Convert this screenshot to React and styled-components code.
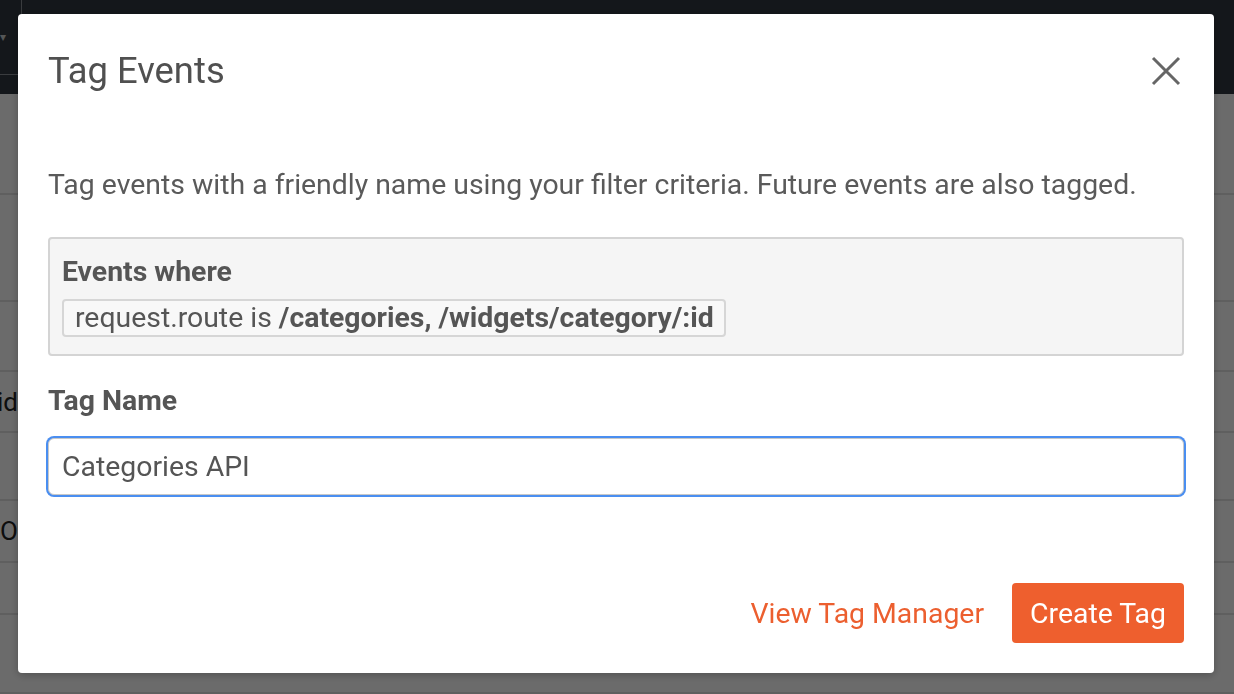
import styled, { createGlobalStyle } from "styled-components";

const GlobalStyle = createGlobalStyle`
  html, body {
    margin: 0;
    padding: 0;
    height: 100%;
    overflow: hidden;
    background: #ffffff;
    font-family: Roboto, "Noto Sans", "Liberation Sans", sans-serif;
  }
  #root {
    height: 100%;
  }
  * {
    box-sizing: border-box;
  }
`;

// Page sitting behind the modal
const Page = styled.div`
  height: 100%;
  display: flex;
  flex-direction: column;
`;

const TopBar = styled.header`
  height: 95px;
  background: #303840;
  display: flex;
`;

const TopBarCell = styled.div`
  width: 22px;
  height: 75px;
  border-right: 1px solid #8a8f96;
  border-bottom: 1px solid #8a8f96;
  display: flex;
  align-items: center;
  color: #c9ccd0;
  font-size: 12px;
`;

const Row = styled.div`
  height: ${(p) => p.h}px;
  border-bottom: 2px solid #e2e2e2;
  display: flex;
  align-items: center;
  font-size: 26px;
  color: #222;
`;

const RowCell = styled.div`
  width: 18px;
  overflow: hidden;
  white-space: nowrap;
  display: flex;
  justify-content: ${(p) => (p.end ? "flex-end" : "flex-start")};
`;

// Modal
const Overlay = styled.div`
  position: fixed;
  inset: 0;
  background: rgba(0, 0, 0, 0.58);
  display: flex;
  justify-content: flex-start;
  align-items: flex-start;
  padding: 14px 0 0 18px;
`;

const Modal = styled.div`
  width: 1196px;
  background: #ffffff;
  border-radius: 4px;
  padding: 37px 30px 30px 30px;
  color: #555555;
  box-shadow: 0 2px 8px rgba(0, 0, 0, 0.25);
`;

const ModalHeader = styled.div`
  display: flex;
  justify-content: space-between;
  align-items: center;
`;

const Title = styled.h2`
  margin: 0;
  font-size: 36.4px;
  line-height: 40px;
  font-weight: 400;
  color: #505050;
`;

const CloseButton = styled.button`
  border: none;
  background: none;
  padding: 0;
  margin-right: 3px;
  width: 30px;
  height: 30px;
  display: flex;
  align-items: center;
  justify-content: center;
  cursor: pointer;
`;

const Description = styled.p`
  margin: 76px 0 0;
  font-size: 28.4px;
  line-height: 36px;
  color: #5a5a5a;
`;

const FilterBox = styled.div`
  margin-top: 34px;
  background: #f5f5f5;
  border: 2px solid #d4d4d4;
  border-radius: 4px;
  padding: 18px 13px 17px 12px;
`;

const Label = styled.div`
  font-size: 28.4px;
  line-height: 30px;
  font-weight: 700;
  color: #555555;
`;

const FieldLabel = styled(Label)`
  margin-top: 30px;
`;

const Chip = styled.span`
  display: inline-block;
  margin-top: 12px;
  padding: 2px 10px 2px 11px;
  border: 2px solid #d6d6d6;
  border-radius: 4px;
  background: #f8f8f8;
  font-size: 28.4px;
  line-height: 30px;
  color: #555555;

  b {
    font-weight: 700;
  }
`;

const TextInput = styled.input`
  display: block;
  width: 100%;
  height: 57px;
  margin-top: 22px;
  padding: 0 13px;
  border: 1px solid #c8c8c8;
  border-radius: 6px;
  box-shadow: 0 0 0 2px #4a8ef0;
  outline: none;
  font-family: inherit;
  font-size: 28.4px;
  color: #555555;
`;

const Footer = styled.div`
  margin-top: 88px;
  display: flex;
  justify-content: flex-end;
  align-items: center;
  gap: 28px;
`;

const TextLink = styled.a`
  font-size: 28.4px;
  color: #ec5f2f;
  text-decoration: none;
  cursor: pointer;
`;

const PrimaryButton = styled.button`
  height: 60px;
  padding: 0 18px;
  border: none;
  border-radius: 4px;
  background: #ee5f2e;
  color: #ffffff;
  font-family: inherit;
  font-size: 28.4px;
  cursor: pointer;
`;

const rows = [
  { h: 102 },
  { h: 108 },
  { h: 70 },
  { h: 62, text: "uuid", end: true },
  { h: 68 },
  { h: 63, text: "Open" },
  { h: 52 },
  { h: 80 },
];

const App = () => {
  return (
    <>
      <GlobalStyle />
      <Page>
        <TopBar>
          <TopBarCell>▾</TopBarCell>
        </TopBar>
        {rows.map((r, i) => (
          <Row key={i} h={r.h}>
            <RowCell end={r.end}>{r.text}</RowCell>
          </Row>
        ))}
      </Page>

      <Overlay>
        <Modal>
          <ModalHeader>
            <Title>Tag Events</Title>
            <CloseButton aria-label="Close">
              <svg width="30" height="30" viewBox="0 0 30 30">
                <path d="M2 2 L28 28 M28 2 L2 28" stroke="#666" strokeWidth="3" />
              </svg>
            </CloseButton>
          </ModalHeader>

          <Description>
            Tag events with a friendly name using your filter criteria. Future events are also tagged.
          </Description>

          <FilterBox>
            <Label>Events where</Label>
            <Chip>
              request.route is <b>/categories, /widgets/category/:id</b>
            </Chip>
          </FilterBox>

          <FieldLabel>Tag Name</FieldLabel>
          <TextInput defaultValue="Categories API" />

          <Footer>
            <TextLink>View Tag Manager</TextLink>
            <PrimaryButton>Create Tag</PrimaryButton>
          </Footer>
        </Modal>
      </Overlay>
    </>
  );
};

export default App;
